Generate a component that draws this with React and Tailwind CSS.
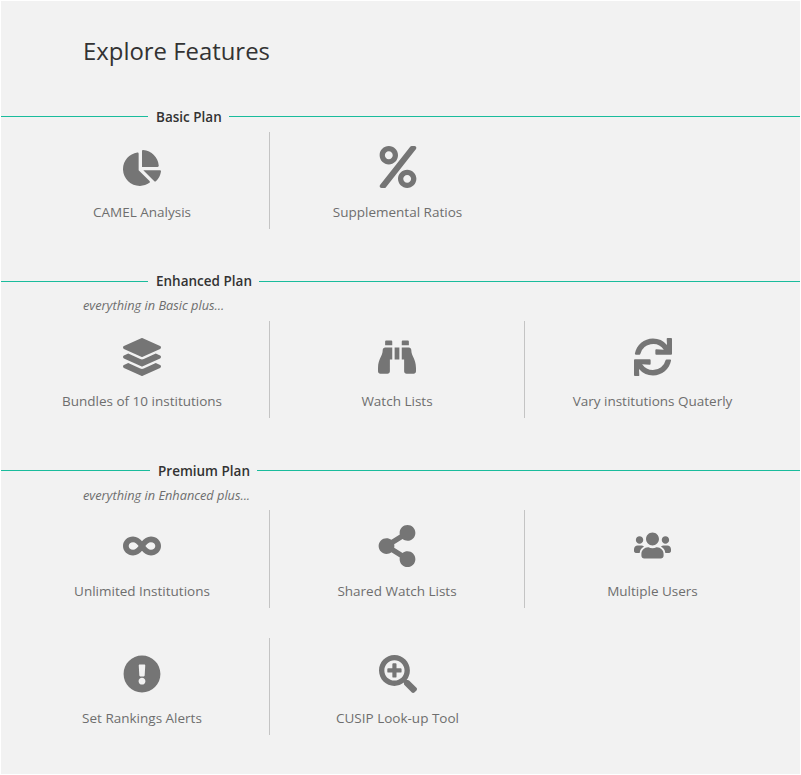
import React from "react";
import { FaChartPie, FaPercent, FaLayerGroup, FaBinoculars, FaSync, FaInfinity, FaShareAlt, FaUsers, FaExclamationCircle, FaSearchPlus } from "react-icons/fa";

function Item({ icon: Icon, size, label, divider, tall, iconClass }) {
  const box = tall ? "h-[98px]" : "h-[97px]";
  const border = divider ? " border-r border-[#c4c4c4]" : "";
  return (
    <div className={"flex flex-col items-center " + box + border}>
      <div className={tall ? "flex h-[71px] items-center py-[1px] text-[#757575]" : "flex h-[70px] items-center pt-[1px] text-[#757575]"}>
        <Icon className={iconClass} style={{ fontSize: size }} />
      </div>
      <div className="text-[13.5px] leading-[20px] text-[#6e6e6e]">{label}</div>
    </div>
  );
}

function Row({ items, className, tall }) {
  return (
    <div className={"ml-[14px] grid w-[765px] grid-cols-3 " + (className || "")}>
      {items.map((it, i) => (
        <Item key={it.label} {...it} tall={tall} divider={i < 2 && i < items.length - 1} />
      ))}
    </div>
  );
}

function PlanHeading({ title, left, lineTop }) {
  return (
    <div className="flex h-[20px] items-start">
      <div className={"h-px bg-[#1abc9c] " + left + " " + lineTop} />
      <div className="pr-[7px] pl-2 text-[13.5px] leading-[20px] font-semibold text-[#333333]">{title}</div>
      <div className={"h-px flex-1 bg-[#1abc9c] " + lineTop} />
    </div>
  );
}

function Note({ children, className }) {
  return <div className={"mt-[6px] ml-[82px] h-[16px] text-[12.75px] leading-[16px] italic text-[#6e6e6e] " + className}>{children}</div>;
}

export default function App() {
  return (
    <div className="h-[775px] bg-white pt-px pl-px font-['Open_Sans',sans-serif]">
      <div className="h-[773px] w-[799px] bg-[#f2f2f2]">
        <h1 className="ml-[82px] pt-[33px] text-[23.9px] leading-[34px] font-normal text-[#333333]">Explore Features</h1>
        <div className="mt-[39px]">
          <PlanHeading title="Basic Plan" left="w-[147px]" lineTop="mt-[9px]" />
          <Row className="mt-[5px]" items={[
            { icon: FaChartPie, size: 38, label: "CAMEL Analysis" },
            { icon: FaPercent, size: 42, label: "Supplemental Ratios", iconClass: "mb-[2px]" },
          ]} />
        </div>
        <div className="mt-[42px]">
          <PlanHeading title="Enhanced Plan" left="w-[147px]" lineTop="mt-[10px]" />
          <Note className="mb-[8px]">everything in Basic plus...</Note>
          <Row items={[
            { icon: FaLayerGroup, size: 38, label: "Bundles of 10 institutions" },
            { icon: FaBinoculars, size: 38, label: "Watch Lists" },
            { icon: FaSync, size: 38, label: "Vary institutions Quaterly" },
          ]} />
        </div>
        <div className="mt-[43px]">
          <PlanHeading title="Premium Plan" left="w-[149px]" lineTop="mt-[9px]" />
          <Note className="mb-[7px]">everything in Enhanced plus...</Note>
          <Row tall items={[
            { icon: FaInfinity, size: 38, label: "Unlimited Institutions" },
            { icon: FaShareAlt, size: 42, label: "Shared Watch Lists" },
            { icon: FaUsers, size: 37, label: "Multiple Users" },
          ]} />
          <Row className="mt-[30px]" items={[
            { icon: FaExclamationCircle, size: 38, label: "Set Rankings Alerts" },
            { icon: FaSearchPlus, size: 38, label: "CUSIP Look-up Tool" },
          ]} />
        </div>
      </div>
    </div>
  );
}
